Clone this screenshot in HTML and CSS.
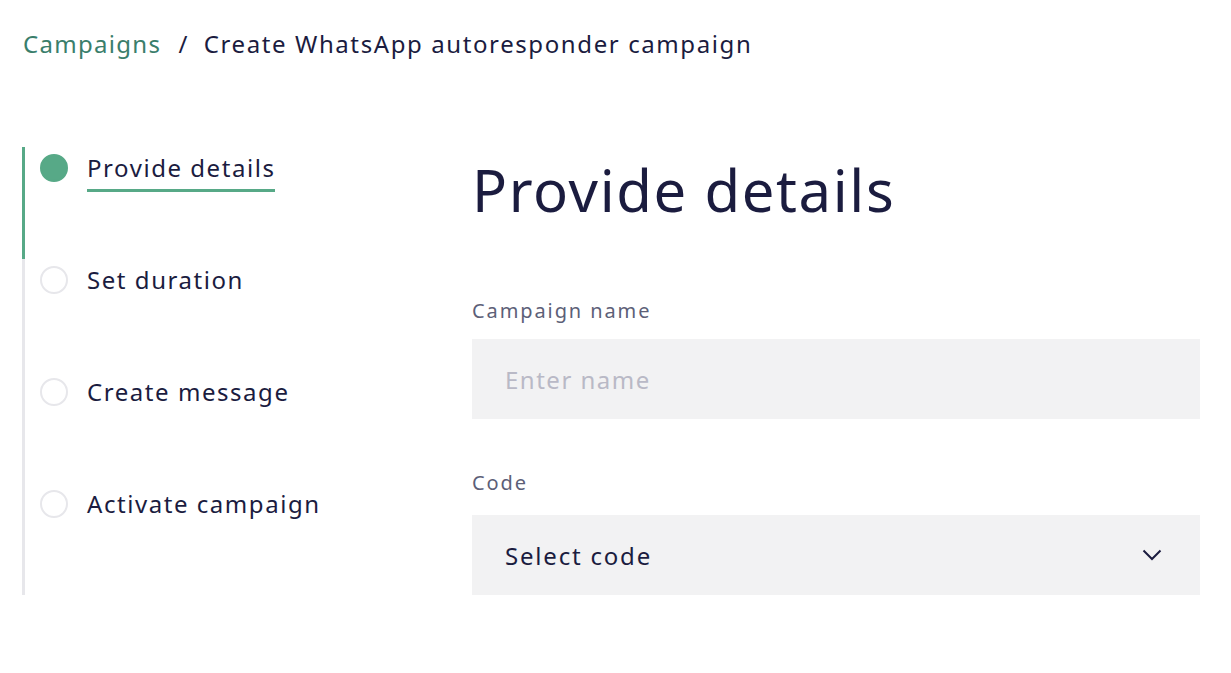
FILE: index.html
```html
<!DOCTYPE html>
<html>
<head>
<meta charset="utf-8">
<link rel="stylesheet" href="styles.css">
</head>
<body>
<nav class="crumbs">
  <a class="crumb-link" href="#">Campaigns</a>
  <span class="crumb-sep">/</span>
  <span class="crumb-current">Create WhatsApp autoresponder campaign</span>
</nav>
<div class="layout">
  <ol class="steps">
    <li class="step active"><span class="dot"></span><span class="step-label">Provide details</span></li>
    <li class="step"><span class="dot"></span><span class="step-label">Set duration</span></li>
    <li class="step"><span class="dot"></span><span class="step-label">Create message</span></li>
    <li class="step"><span class="dot"></span><span class="step-label">Activate campaign</span></li>
  </ol>
  <main class="content">
    <h1 class="title">Provide details</h1>
    <label class="field-label">Campaign name</label>
    <div class="input"><span class="placeholder">Enter name</span></div>
    <label class="field-label code-label">Code</label>
    <div class="input select">
      <span class="value">Select code</span>
      <svg class="chev" width="20" height="12" viewBox="0 0 20 12"><path d="M1.5 1.5 L10 10 L18.5 1.5" fill="none" stroke="#1b1c3f" stroke-width="2"/></svg>
    </div>
  </main>
</div>
</body>
</html>
```
FILE: styles.css
```css
* { box-sizing: border-box; }
body {
  margin: 0;
  font-family: "Noto Sans", "Liberation Sans", sans-serif;
  color: #1b1c3f;
  background: #fff;
}
.crumbs {
  padding: 26px 0 0 23px;
  height: 147px;
  font-size: 24px;
  line-height: 36px;
}
.crumb-link { color: #3a7e6b; text-decoration: none; letter-spacing: 1.3px; }
.crumb-sep { margin: 0 10px 0 11px; }
.crumb-current { letter-spacing: 1.6px; }
.layout { display: flex; padding-left: 22px; }
.steps {
  list-style: none;
  margin: 0;
  padding: 0;
  width: 450px;
}
.step {
  height: 112px;
  border-left: 3px solid #e7e7eb;
  display: flex;
  align-items: flex-start;
  padding: 7px 0 0 15px;
}
.step.active { border-left-color: #57a987; }
.dot {
  width: 28px;
  height: 28px;
  border-radius: 50%;
  border: 2px solid #e7e7eb;
  flex: none;
}
.step.active .dot { background: #57a987; border-color: #57a987; }
.step-label {
  margin-left: 19px;
  font-size: 24px;
  line-height: 28px;
  letter-spacing: 1.55px;
}
.step.active .step-label {
  border-bottom: 3px solid #57a987;
  padding-bottom: 7px;
}
.content { width: 728px; }
.title {
  margin: 0;
  padding-top: 8px;
  font-size: 58px;
  font-weight: 400;
  line-height: 70px;
  letter-spacing: 1.6px;
}
.field-label {
  display: block;
  margin-top: 72px;
  font-size: 20px;
  line-height: 28px;
  color: #5d5f78;
  letter-spacing: 1.9px;
}
.code-label { margin-top: 50px; }
.input {
  margin-top: 14px;
  height: 80px;
  background: #f2f2f3;
  display: flex;
  align-items: center;
  padding: 0 33px;
  font-size: 24px;
  letter-spacing: 1.5px;
}
.placeholder { color: #b9b9c6; }
.select { margin-top: 18px; justify-content: space-between; padding-right: 38px; letter-spacing: 1.8px; }
.chev { display: block; }
```
